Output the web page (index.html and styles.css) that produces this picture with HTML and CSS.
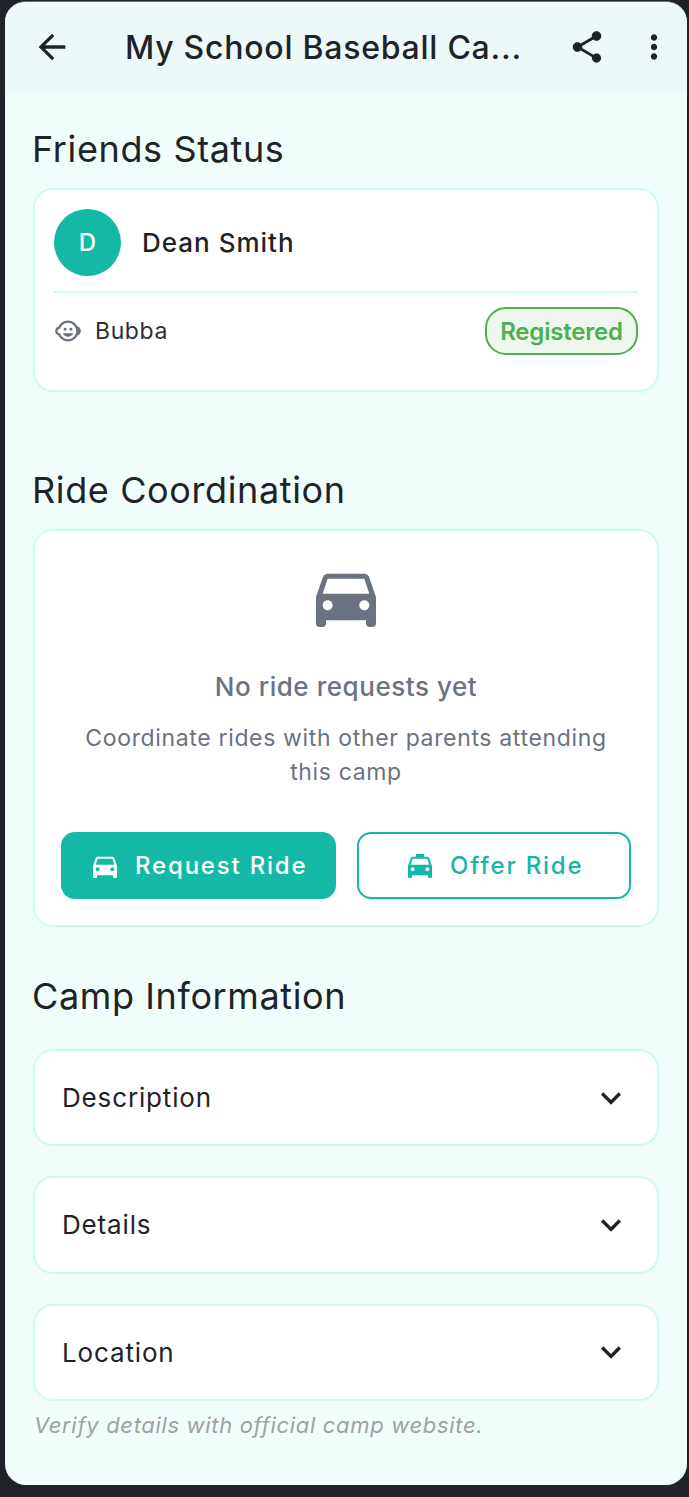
FILE: index.html
```html
<!DOCTYPE html>
<html lang="en">
<head>
<meta charset="utf-8">
<title>My School Baseball Camp</title>
<link rel="stylesheet" href="styles.css">
</head>
<body>
<div class="phone">
  <header class="appbar">
    <svg class="icon back" viewBox="0 0 24 24"><path d="M20 11H7.83l5.59-5.59L12 4l-8 8 8 8 1.41-1.41L7.83 13H20v-2z"/></svg>
    <h1 class="title">My School Baseball Ca...</h1>
    <svg class="icon share" viewBox="0 0 24 24"><path d="M18 16.08c-.76 0-1.44.3-1.96.77L8.91 12.7c.05-.23.09-.46.09-.7s-.04-.47-.09-.7l7.05-4.11c.54.5 1.25.81 2.04.81 1.66 0 3-1.34 3-3s-1.34-3-3-3-3 1.34-3 3c0 .24.04.47.09.7L8.04 9.81C7.5 9.31 6.79 9 6 9c-1.66 0-3 1.34-3 3s1.34 3 3 3c.79 0 1.5-.31 2.04-.81l7.12 4.16c-.05.21-.08.43-.08.65 0 1.61 1.31 2.92 2.92 2.92s2.92-1.31 2.92-2.92-1.31-2.92-2.92-2.92z"/></svg>
    <svg class="icon more" viewBox="0 0 24 24"><path d="M12 8c1.1 0 2-.9 2-2s-.9-2-2-2-2 .9-2 2 .9 2 2 2zm0 2c-1.1 0-2 .9-2 2s.9 2 2 2 2-.9 2-2-.9-2-2-2zm0 6c-1.1 0-2 .9-2 2s.9 2 2 2 2-.9 2-2-.9-2-2-2z"/></svg>
  </header>
  <main class="content">
    <h2 class="section-title">Friends Status</h2>
    <section class="card friends">
      <div class="friend">
        <div class="avatar">D</div>
        <div class="friend-name">Dean Smith</div>
      </div>
      <div class="child">
        <svg class="child-icon" viewBox="0 0 24 24"><circle cx="14.5" cy="10.5" r="1.25"/><circle cx="9.5" cy="10.5" r="1.25"/><path d="M22.94 12.66c.04-.21.06-.43.06-.66s-.02-.45-.06-.66c-.25-1.51-1.36-2.74-2.81-3.17-.53-1.12-1.28-2.1-2.19-2.91C16.36 3.85 14.28 3 12 3s-4.36.85-5.94 2.26c-.92.81-1.67 1.8-2.19 2.91-1.45.43-2.56 1.65-2.81 3.17-.04.21-.06.43-.06.66s.02.45.06.66c.25 1.51 1.36 2.74 2.81 3.17.52 1.11 1.27 2.09 2.17 2.89C7.62 20.14 9.71 21 12 21s4.38-.86 5.97-2.28c.9-.8 1.65-1.79 2.17-2.89 1.44-.43 2.55-1.65 2.8-3.17zM19 14c-.1 0-.19-.02-.29-.03-.2.67-.49 1.29-.86 1.86C16.6 17.74 14.45 19 12 19s-4.6-1.26-5.85-3.17c-.37-.57-.66-1.19-.86-1.86-.1.01-.19.03-.29.03-1.1 0-2-.9-2-2s.9-2 2-2c.1 0 .19.02.29.03.2-.67.49-1.29.86-1.86C7.4 6.26 9.55 5 12 5s4.6 1.26 5.85 3.17c.37.57.66 1.19.86 1.86.1-.01.19-.03.29-.03 1.1 0 2-.9 2-2s-.9 2-2 2zM7.5 14c.76 1.77 2.49 3 4.5 3s3.74-1.23 4.5-3h-9z"/></svg>
        <span class="child-name">Bubba</span>
        <span class="badge">Registered</span>
      </div>
    </section>

    <h2 class="section-title rides-title">Ride Coordination</h2>
    <section class="card rides">
      <svg class="car-icon" viewBox="0 0 24 24"><path d="M18.92 6.01C18.72 5.42 18.16 5 17.5 5h-11c-.66 0-1.21.42-1.42 1.01L3 12v8c0 .55.45 1 1 1h1c.55 0 1-.45 1-1v-1h12v1c0 .55.45 1 1 1h1c.55 0 1-.45 1-1v-8l-2.08-5.99zM6.5 16c-.83 0-1.5-.67-1.5-1.5S5.67 13 6.5 13s1.5.67 1.5 1.5S7.33 16 6.5 16zm11 0c-.83 0-1.5-.67-1.5-1.5s.67-1.5 1.5-1.5 1.5.67 1.5 1.5-.67 1.5-1.5 1.5zM5 11l1.5-4.5h11L19 11H5z"/></svg>
      <div class="empty-title">No ride requests yet</div>
      <p class="empty-text">Coordinate rides with other parents attending this camp</p>
      <div class="actions">
        <div class="btn btn-solid">
          <svg class="btn-icon" viewBox="0 0 24 24"><path d="M18.92 6.01C18.72 5.42 18.16 5 17.5 5h-11c-.66 0-1.21.42-1.42 1.01L3 12v8c0 .55.45 1 1 1h1c.55 0 1-.45 1-1v-1h12v1c0 .55.45 1 1 1h1c.55 0 1-.45 1-1v-8l-2.08-5.99zM6.5 16c-.83 0-1.5-.67-1.5-1.5S5.67 13 6.5 13s1.5.67 1.5 1.5S7.33 16 6.5 16zm11 0c-.83 0-1.5-.67-1.5-1.5s.67-1.5 1.5-1.5 1.5.67 1.5 1.5-.67 1.5-1.5 1.5zM5 11l1.5-4.5h11L19 11H5z"/></svg>
          <span>Request Ride</span>
        </div>
        <div class="btn btn-outline">
          <svg class="btn-icon" viewBox="0 0 24 24"><path d="M18.92 6.01C18.72 5.42 18.16 5 17.5 5H15V3H9v2H6.5c-.66 0-1.21.42-1.42 1.01L3 12v8c0 .55.45 1 1 1h1c.55 0 1-.45 1-1v-1h12v1c0 .55.45 1 1 1h1c.55 0 1-.45 1-1v-8l-2.08-5.99zM6.5 16c-.83 0-1.5-.67-1.5-1.5S5.67 13 6.5 13s1.5.67 1.5 1.5S7.33 16 6.5 16zm11 0c-.83 0-1.5-.67-1.5-1.5s.67-1.5 1.5-1.5 1.5.67 1.5 1.5-.67 1.5-1.5 1.5zM5 11l1.5-4.5h11L19 11H5z"/></svg>
          <span>Offer Ride</span>
        </div>
      </div>
    </section>

    <h2 class="section-title info-title">Camp Information</h2>
    <div class="accordion">
      <div class="card acc-item"><span>Description</span><svg class="chev" viewBox="0 0 24 24"><path d="M16.59 8.59 12 13.17 7.41 8.59 6 10l6 6 6-6z"/></svg></div>
      <div class="card acc-item"><span>Details</span><svg class="chev" viewBox="0 0 24 24"><path d="M16.59 8.59 12 13.17 7.41 8.59 6 10l6 6 6-6z"/></svg></div>
      <div class="card acc-item"><span>Location</span><svg class="chev" viewBox="0 0 24 24"><path d="M16.59 8.59 12 13.17 7.41 8.59 6 10l6 6 6-6z"/></svg></div>
    </div>
    <p class="note">Verify details with official camp website.</p>
  </main>
</div>
</body>
</html>
```
FILE: styles.css
```css
* { box-sizing: border-box; }
html, body { margin: 0; padding: 0; }
body {
  width: 689px;
  height: 1497px;
  overflow: hidden;
  background: #1f2329;
  font-family: Inter, "Noto Sans", sans-serif;
  color: #1f2328;
}
.phone {
  margin: 1px 2px 0 5px;
  height: 1484px;
  border-radius: 21px;
  overflow: hidden;
  background: #f0fdfa;
  border-top: 1px solid #6b7278;
}
.appbar {
  display: flex;
  align-items: center;
  height: 92px;
  padding: 0 0 2px 27px;
  background: #ecf9f8;
}
.icon { fill: #1f2328; flex: none; }
.back { width: 40px; height: 40px; }
.title {
  margin: 0 0 0 53px;
  width: 396px;
  font-size: 32px;
  font-weight: 500;
  letter-spacing: .75px;
  white-space: nowrap;
}
.share { width: 38px; height: 38px; margin-left: 47px; }
.more { width: 38px; height: 38px; margin-left: 29px; }
.content { padding: 29px 28px 0; }
.section-title {
  margin: 0 0 0 -1px;
  font-size: 36px;
  line-height: 52px;
  font-weight: 400;
  letter-spacing: .62px;
}
.card {
  background: #fff;
  border: 2px solid #ccfbf1;
  border-radius: 20px;
}
.friends { margin-top: 13px; height: 204px; padding: 19px 19px 0; }
.friend {
  display: flex;
  align-items: center;
  gap: 21px;
  height: 84px;
  padding-bottom: 15px;
  border-bottom: 2px solid #ccfbf1;
}
.avatar {
  flex: none;
  width: 67px;
  height: 67px;
  border-radius: 50%;
  background: #14b8a6;
  color: #fff;
  display: flex;
  align-items: center;
  justify-content: center;
  font-size: 24px;
  font-weight: 500;
}
.friend-name { font-size: 26px; font-weight: 500; letter-spacing: 1px; }
.child { display: flex; align-items: center; margin-top: 14px; }
.child-icon { width: 28px; height: 28px; fill: #6b7280; }
.child-name { margin-left: 13px; font-size: 23px; letter-spacing: .6px; color: #2b2f36; }
.badge {
  margin-left: auto;
  height: 48px;
  width: 153px;
  border: 2px solid #4caf50;
  border-radius: 21px;
  background: #edf7ee;
  color: #4caf50;
  font-size: 24px;
  font-weight: 600;
  letter-spacing: -.2px;
  display: flex;
  align-items: center;
  justify-content: center;
}
.rides-title { margin-top: 72px; }
.rides {
  margin-top: 13px;
  height: 398px;
  padding: 26px 26px 0;
  display: flex;
  flex-direction: column;
  align-items: center;
}
.car-icon { flex: none; width: 80px; height: 80px; fill: #6b7280; }
.empty-title { margin-top: 30px; font-size: 26px; line-height: 40px; font-weight: 500; letter-spacing: .55px; color: #6b7280; }
.empty-text {
  margin: 14px 0 0;
  max-width: 540px;
  text-align: center;
  font-size: 23px;
  line-height: 34px;
  letter-spacing: .65px;
  color: #6b7280;
}
.actions { display: flex; gap: 21px; width: 570px; margin-top: 43px; }
.btn {
  flex: none;
  width: 274.5px;
  height: 67px;
  border-radius: 14px;
  display: flex;
  align-items: center;
  justify-content: center;
  gap: 14px;
  font-size: 24px;
  font-weight: 500;
  letter-spacing: 1.8px;
}
.btn-icon { flex: none; width: 32px; height: 32px; fill: currentColor; }
.btn-solid { background: #14b8a6; color: #fff; }
.btn-outline { border: 2px solid #14b8a6; color: #14b8a6; }
.info-title { margin-top: 43px; }
.accordion { display: flex; flex-direction: column; gap: 30px; margin-top: 27px; }
.acc-item {
  height: 97.3px;
  display: flex;
  align-items: center;
  justify-content: space-between;
  padding: 0 26px 0 27px;
  font-size: 26px;
  font-weight: 400;
  letter-spacing: .85px;
}
.chev { flex: none; width: 40px; height: 40px; fill: #1f2328; }
.note {
  margin: 9px 0 0 1px;
  font-size: 22px;
  line-height: 30px;
  font-style: italic;
  letter-spacing: .67px;
  color: #a1a1a1;
}
```
